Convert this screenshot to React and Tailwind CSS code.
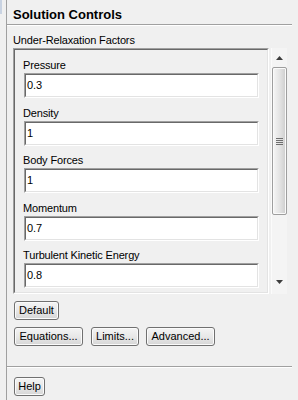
import React from 'react';

const factors = [
  { label: 'Pressure', value: '0.3' },
  { label: 'Density', value: '1' },
  { label: 'Body Forces', value: '1' },
  { label: 'Momentum', value: '0.7' },
  { label: 'Turbulent Kinetic Energy', value: '0.8' },
];

// Win7-ish push button
const Button = ({ children, width }) => (
  <button
    className={`${width} h-[19px] rounded-[3px] border border-[#707070] bg-gradient-to-b from-[#f4f4f4] via-[#e8e8e8] to-[#d6d6d6] shadow-[inset_0_0_0_1px_#fbfbfb] text-[11px] leading-none text-black flex items-center justify-center`}
  >
    {children}
  </button>
);

// sunken field (double bevel)
const Sunken = ({ className = '', inner = '', children }) => (
  <div className={`border border-t-[#a0a0a0] border-l-[#a0a0a0] border-b-white border-r-white ${className}`}>
    <div className={`h-full border border-t-[#696969] border-l-[#696969] border-b-[#e3e3e3] border-r-[#e3e3e3] ${inner}`}>
      {children}
    </div>
  </div>
);

const Scrollbar = () => (
  <div className="w-[16px] h-[246px] ml-[2px] bg-[#f4f4f4] border-l border-[#fbfbfb] flex flex-col items-center">
    {/* up arrow */}
    <div className="h-[19px] w-full flex items-center justify-center">
      <svg width="7" height="4" viewBox="0 0 7 4">
        <path d="M3.5 0 L7 4 L0 4 Z" fill="#3c3c3c" />
      </svg>
    </div>
    {/* thumb */}
    <div className="w-[15px] h-[148px] rounded-[2px] border border-[#9e9e9e] bg-gradient-to-r from-[#f6f6f6] via-[#e4e4e4] to-[#cdcdcd] shadow-[inset_0_0_0_1px_#fafafa] flex items-center justify-center">
      <div className="flex flex-col gap-[1px]">
        <div className="w-[7px] h-[1px] bg-[#6e6e6e]" />
        <div className="w-[7px] h-[1px] bg-[#6e6e6e]" />
        <div className="w-[7px] h-[1px] bg-[#6e6e6e]" />
        <div className="w-[7px] h-[1px] bg-[#6e6e6e]" />
      </div>
    </div>
    <div className="flex-1" />
    {/* down arrow */}
    <div className="h-[17px] w-full flex items-start justify-center pt-[3px]">
      <svg width="7" height="4" viewBox="0 0 7 4">
        <path d="M0 0 L7 0 L3.5 4 Z" fill="#3c3c3c" />
      </svg>
    </div>
  </div>
);

export default function App() {
  return (
    <div className="w-[298px] h-[400px] bg-[#f0f0f0] flex font-['Liberation_Sans',Arial,sans-serif] text-black overflow-hidden">
      {/* left strip */}
      <div className="w-[6px] shrink-0">
        <div className="w-[2px] h-[14px] bg-[#c9d3e2]" />
      </div>

      <div className="flex-1 border-l border-[#a0a0a0] flex flex-col">
        {/* title */}
        <div className="h-[24px] pt-[7px] pl-[6px]">
          <h2 className="text-[13px] leading-[16px] font-bold">Solution Controls</h2>
        </div>
        <div className="mr-[6px] h-[1px] bg-[#a0a0a0]" />
        <div className="mr-[6px] h-[1px] bg-white" />

        {/* group label */}
        <div className="mt-[8px] pl-[6px] text-[11px] leading-[13px] tracking-[-0.15px]">
          Under-Relaxation Factors
        </div>

        {/* scroll pane */}
        <div className="mt-[1px] ml-[6px] flex">
          <Sunken className="w-[256px] h-[246px]" inner="overflow-hidden">
            <div className="pt-[9px] flex flex-col gap-[8.5px]">
              {factors.map((f) => (
                <div key={f.label} className="flex flex-col">
                  <div className="pl-[8px] text-[11px] leading-[13px] tracking-[-0.15px]">{f.label}</div>
                  <Sunken className="mt-[1px] ml-[9px] w-[235px] h-[25px]" inner="bg-white flex items-center pl-[1px]">
                    <span className="text-[11px] leading-none tracking-[-0.1px]">{f.value}</span>
                  </Sunken>
                </div>
              ))}
            </div>
          </Sunken>
          <Scrollbar />
        </div>

        {/* buttons */}
        <div className="mt-[7px] ml-[7px] flex">
          <Button width="w-[45px]">Default</Button>
        </div>
        <div className="mt-[7px] ml-[7px] flex">
          <Button width="w-[69px]">Equations...</Button>
          <div className="ml-[8px]">
            <Button width="w-[48px]">Limits...</Button>
          </div>
          <div className="ml-[7px]">
            <Button width="w-[69px]">Advanced...</Button>
          </div>
        </div>

        <div className="mt-[20px] mr-[6px] h-[1px] bg-[#a0a0a0]" />
        <div className="mr-[6px] h-[1px] bg-white" />

        <div className="mt-[9px] ml-[7px] flex">
          <Button width="w-[31px]">Help</Button>
        </div>
      </div>
    </div>
  );
}
